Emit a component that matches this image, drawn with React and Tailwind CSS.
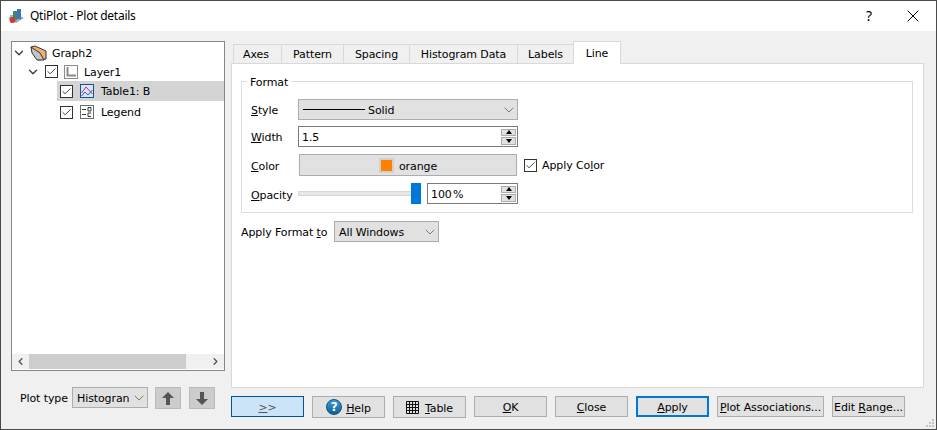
import React from 'react';
import { ChevronDown, ChevronLeft, ChevronRight, Check, X } from 'lucide-react';

const Chevron = ({ className = '' }) => <ChevronDown className={`w-[16px] h-[16px] mt-[1px] text-[#555555] ${className}`} strokeWidth={1.1} />;
const TreeChevron = () => <ChevronDown className="w-[14px] h-[14px] text-[#444444]" strokeWidth={2.5} />;

function CheckBox({ className = '' }) {
  return (
    <span className={`w-[13px] h-[13px] border border-[#333333] bg-white flex items-center justify-center shrink-0 ${className}`}>
      <Check className="w-[11px] h-[11px] text-[#333333]" strokeWidth={2} />
    </span>
  );
}

function Combo({ className = '', children }) {
  return (
    <div className={`h-[21px] border border-[#adadad] bg-[#e1e1e1] flex items-center justify-between shrink-0 ${className}`}>
      {children}
      <Chevron />
    </div>
  );
}

function Spin({ className = '', value }) {
  return (
    <div className={`h-[21px] border border-[#7a7a7a] bg-white flex items-center justify-between pl-[3px] pr-[1px] shrink-0 ${className}`}>
      <span className="pt-[2px] [word-spacing:-2px]">{value}</span>
      <div className="w-[15px] h-[16px] flex flex-col gap-[1px]">
        <div className="flex-1 bg-[#e1e1e1] border border-[#adadad] flex items-center justify-center">
          <span className="w-0 h-0 border-x-[3px] border-x-transparent border-b-[4px] border-b-black" />
        </div>
        <div className="flex-1 bg-[#e1e1e1] border border-[#adadad] flex items-center justify-center">
          <span className="w-0 h-0 border-x-[3px] border-x-transparent border-t-[4px] border-t-black" />
        </div>
      </div>
    </div>
  );
}

function Btn({ className = 'w-[73px] h-[21px]', children }) {
  return (
    <button className={`border border-[#adadad] bg-[#e1e1e1] flex items-center justify-center gap-[4px] shrink-0 ${className}`}>
      {children}
    </button>
  );
}

function AppIcon() {
  return (
    <svg width="16" height="16" viewBox="0 0 16 16" className="shrink-0">
      <path d="M0 10 L8 6 L16 10 L8 15 Z" fill="#a8a8a8" />
      <rect x="5" y="3" width="4" height="9" fill="#3f8a66" />
      <rect x="9" y="1" width="4" height="10" fill="#3c74c4" />
      <rect x="2" y="7" width="3" height="4" fill="#8fb4dc" />
      <circle cx="4.5" cy="12" r="3" fill="#c83a3a" />
    </svg>
  );
}

function GraphIcon() {
  return (
    <svg width="17" height="16" viewBox="0 0 17 16" className="shrink-0">
      <path d="M1 2 L5 1 L16 6 L16 14 L8 15 Z" fill="#f2b06c" stroke="#333333" strokeWidth="1" />
      <path d="M1 2 L2 8 L7 15 L14 15 L10 8 Z" fill="#c4c4c4" stroke="#333333" strokeWidth="1" />
    </svg>
  );
}

function LayerIcon() {
  return (
    <svg width="14" height="14" viewBox="0 0 14 14" className="shrink-0">
      <rect x="0.5" y="0.5" width="13" height="13" fill="#ffffff" stroke="#8a8a8a" />
      <path d="M3.5 2 V10.5 H12" fill="none" stroke="#8a8a8a" strokeWidth="2" />
    </svg>
  );
}

function TableCurveIcon() {
  return (
    <svg width="14" height="14" viewBox="0 0 14 14" className="shrink-0">
      <rect x="0.5" y="0.5" width="13" height="13" fill="#d5e6fb" stroke="#1f4f8f" />
      <path d="M1.5 9 L6 3 L12.5 10" fill="none" stroke="#d83030" strokeWidth="1" />
      <path d="M1.5 12 L5 8 L8 11 L12.5 6" fill="none" stroke="#2a5ad8" strokeWidth="1" />
    </svg>
  );
}

function LegendIcon() {
  return (
    <svg width="14" height="14" viewBox="0 0 14 14" className="shrink-0">
      <rect x="0.5" y="0.5" width="13" height="13" fill="#ffffff" stroke="#6a6a6a" />
      <path d="M2 4.5 H6 M2 9.5 H6" stroke="#333333" strokeWidth="1" />
      <path d="M8 2.5 H11 V6 H8 Z M11 8 H8 V11.5 H11" fill="none" stroke="#333333" strokeWidth="1" />
    </svg>
  );
}

function HelpIcon() {
  return (
    <span className="w-[16px] h-[16px] rounded-full border border-[#0f4f7f] bg-gradient-to-b from-[#3b9ad6] to-[#0f5f96] text-white text-[12px] font-bold flex items-center justify-center shrink-0">?</span>
  );
}

function GridIcon() {
  return (
    <svg width="13" height="13" viewBox="0 0 13 13" className="shrink-0">
      <path d="M0.5 0.5 H12.5 V12.5 H0.5 Z M0.5 3.5 H12.5 M0.5 6.5 H12.5 M0.5 9.5 H12.5 M3.5 0.5 V12.5 M6.5 0.5 V12.5 M9.5 0.5 V12.5" fill="none" stroke="#111111" />
    </svg>
  );
}

function Arrow({ up }) {
  return (
    <svg width="12" height="13" viewBox="0 0 12 13">
      <path d={up ? 'M6 0 L12 6 H8 V13 H4 V6 H0 Z' : 'M6 13 L12 7 H8 V0 H4 V7 H0 Z'} fill="#555555" />
    </svg>
  );
}

const tabs = [
  ['Axes', 'w-[49px] pr-[3px]'],
  ['Pattern', 'w-[63px]'],
  ['Spacing', 'w-[67px]'],
  ['Histogram Data', 'w-[109px]'],
  ['Labels', 'w-[57px]'],
];

export default function App() {
  return (
    <div className="w-[937px] h-[430px] border border-[#4a4a4a] bg-[#f0f0f0] flex flex-col overflow-hidden text-[11px] leading-[14px] tracking-[-0.1px] [text-decoration-skip-ink:none] text-black font-['DejaVu_Sans',sans-serif]">
      <div className="h-[30px] bg-white flex items-center pl-[7px] shrink-0">
        <AppIcon />
        <span className="ml-[6px] text-[12px] tracking-[-0.25px] font-['Noto_Sans',sans-serif]">QtiPlot - Plot details</span>
        <span className="ml-auto mr-[31px] text-[14px] font-['Noto_Sans',sans-serif]">?</span>
        <X className="mr-[13px] w-[20px] h-[20px] text-black" strokeWidth={1.2} />
      </div>

      <div className="relative flex-1 flex pl-[10px] pt-[10px]">
        {/* left side: tree and plot type */}
        <div className="w-[214px] mr-[6px] shrink-0 flex flex-col">
          <div className="h-[330px] border border-[#828790] bg-white flex flex-col">
            <div className="flex-1 pt-[1px]">
              <div className="h-[19px] flex items-center">
                <TreeChevron />
                <span className="ml-[4px]"><GraphIcon /></span>
                <span className="ml-[5px] pt-[2px]">Graph2</span>
              </div>
              <div className="h-[19px] flex items-center pl-[14px]">
                <TreeChevron />
                <CheckBox className="ml-[5px]" />
                <span className="ml-[6px]"><LayerIcon /></span>
                <span className="ml-[6px] pt-[3px]">Layer1</span>
              </div>
              <div className="h-[20px] ml-[45px] bg-[#d4d4d4] flex items-center pl-[3px]">
                <CheckBox />
                <span className="ml-[7px]"><TableCurveIcon /></span>
                <span className="ml-[7px] pt-[2px]">Table1: B</span>
              </div>
              <div className="h-[22px] ml-[45px] flex items-center pl-[3px]">
                <CheckBox />
                <span className="ml-[7px]"><LegendIcon /></span>
                <span className="ml-[7px] pt-[2px]">Legend</span>
              </div>
            </div>
            <div className="h-[15px] mb-[1px] bg-[#f0f0f0] flex items-center">
              <span className="w-[17px] flex justify-center"><ChevronLeft className="w-[11px] h-[11px] text-[#555555]" strokeWidth={3} /></span>
              <div className="w-[157px] h-full bg-[#cdcdcd]" />
              <span className="ml-auto w-[17px] flex justify-center"><ChevronRight className="w-[11px] h-[11px] text-[#555555]" strokeWidth={3} /></span>
            </div>
          </div>
          <div className="mt-[16px] flex items-start">
            <span className="ml-[9px] w-[52px] pt-[5px]">Plot type</span>
            <Combo className="w-[76px] pl-[4px]"><span className="pt-[2px] overflow-hidden whitespace-nowrap">Histogran</span></Combo>
            <div className="ml-[7px] w-[26px] h-[22px] bg-[#cccccc] border border-[#bbbbbb] flex items-center justify-center"><Arrow up /></div>
            <div className="ml-[8px] w-[26px] h-[22px] bg-[#cccccc] border border-[#bbbbbb] flex items-center justify-center"><Arrow /></div>
          </div>
        </div>

        {/* right side: tabs, page and buttons */}
        <div className="w-[693px] shrink-0 flex flex-col">
          <div className="h-[22px] flex items-end pl-[2px]">
            {tabs.map(([name, w]) => (
              <div key={name} className={`h-[19px] ${w} pt-[2px] bg-[#f0f0f0] border border-b-0 border-[#d9d9d9] -mr-[1px] flex items-center justify-center shrink-0`}>{name}</div>
            ))}
            <div className="relative z-10 h-[23px] w-[48px] pt-[2px] -mb-[1px] bg-white border border-b-0 border-[#d9d9d9] flex items-center justify-center shrink-0">Line</div>
          </div>
          <div className="h-[325px] bg-white border border-[#d9d9d9] pl-[9px] pt-[17px]">
            <div className="relative w-[672px] h-[132px] border border-[#dcdcdc] pl-[9px] pt-[17px]">
              <span className="absolute -top-[6px] left-[5px] bg-white px-[3px]">Format</span>
              <div className="flex items-center">
                <span className="w-[47px] pt-[2px]"><u>S</u>tyle</span>
                <Combo className="w-[220px] pl-[4px]">
                  <span className="flex items-center">
                    <span className="w-[62px] h-px bg-black" />
                    <span className="ml-[3px] pt-[2px]">Solid</span>
                  </span>
                </Combo>
              </div>
              <div className="flex items-center mt-[6px]">
                <span className="w-[47px] pt-[2px]"><u>W</u>idth</span>
                <Spin className="w-[220px]" value="1.5" />
              </div>
              <div className="flex items-center mt-[7px]">
                <span className="w-[48px] pt-[4px]"><u>C</u>olor</span>
                <div className="w-[218px] h-[22px] border border-[#adadad] bg-[#e1e1e1] flex items-center justify-center shrink-0">
                  <span className="w-[15px] h-[15px] border-[2px] border-[#d0d0d0] bg-[#ff8000]" />
                  <span className="ml-[5px] pt-[4px]">orange</span>
                </div>
                <CheckBox className="ml-[7px]" />
                <span className="ml-[5px] pt-[2px]">Apply Co<u>l</u>or</span>
              </div>
              <div className="flex items-center mt-[7px]">
                <span className="w-[47px] pt-[4px]"><u>O</u>pacity</span>
                <div className="relative w-[123px] h-[21px] flex items-center shrink-0">
                  <div className="w-full h-[5px] bg-[#e7e7e7] border border-[#d6d6d6]" />
                  <div className="absolute right-0 top-0 w-[10px] h-[21px] bg-[#0078d7]" />
                </div>
                <Spin className="ml-[6px] w-[91px]" value="100 %" />
              </div>
            </div>
            <div className="flex items-center mt-[8px]">
              <span className="w-[93px] pt-[2px]">Apply Format <u>t</u>o</span>
              <Combo className="w-[105px] pl-[4px]"><span className="pt-[2px]">All Windows</span></Combo>
            </div>
          </div>
          <div className="mt-[8px] flex items-start gap-[8px]">
            <Btn className="w-[73px] h-[21px] pt-[3px] !border-[#005499] !bg-[#cce4f7] text-[#555555]"><span><u>&gt;</u>&gt;</span></Btn>
            <Btn className="w-[73px] h-[22px]"><HelpIcon /><span className="pt-[4px]"><u>H</u>elp</span></Btn>
            <Btn className="w-[73px] h-[22px]"><GridIcon /><span className="ml-[2px] pt-[4px]"><u>T</u>able</span></Btn>
            <Btn className="w-[73px] h-[21px] pt-[3px]"><span><u>O</u>K</span></Btn>
            <Btn className="w-[73px] h-[21px] pt-[3px]"><span><u>C</u>lose</span></Btn>
            <Btn className="w-[73px] h-[21px] pt-[2px] !border-2 !border-[#0078d7]"><span><u>A</u>pply</span></Btn>
            <Btn className="w-[107px] h-[21px] pt-[3px]"><span><u>P</u>lot Associations...</span></Btn>
            <Btn className="w-[73px] h-[21px] pt-[3px]"><span>Edit <u>R</u>ange...</span></Btn>
          </div>
        </div>

        {/* resize grip */}
        <svg width="10" height="10" viewBox="0 0 10 10" className="absolute right-[1px] bottom-[1px]">
          <path d="M7 1h2v2H7zM4 4h2v2H4zM7 4h2v2H7zM1 7h2v2H1zM4 7h2v2H4zM7 7h2v2H7z" fill="#c4c4c4" />
        </svg>
      </div>
    </div>
  );
}
